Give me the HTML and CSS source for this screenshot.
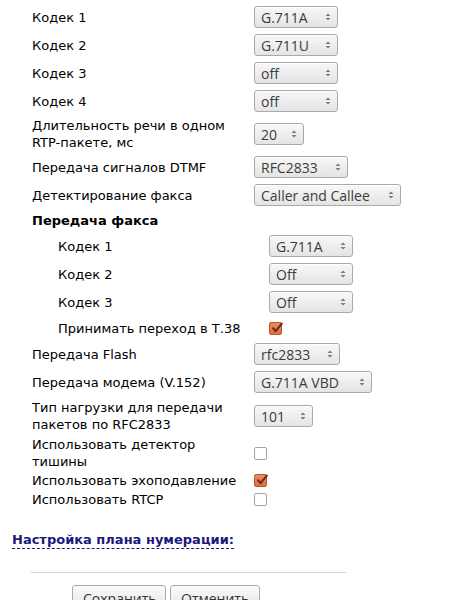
FILE: index.html
```html
<!DOCTYPE html>
<html lang="ru">
<head>
<meta charset="utf-8">
<title>Настройки</title>
<link rel="stylesheet" href="styles.css">
</head>
<body>
<div class="page">
  <div class="settings">
    <div class="row"><span class="label">Кодек 1</span><span class="sel w84"><select><option>G.711A</option></select><svg class="arr" viewBox="0 0 6 10"><path d="M0.5 4L3 1.5L5.5 4Z M0.5 6L3 8.5L5.5 6Z"/></svg></span></div>
    <div class="row"><span class="label">Кодек 2</span><span class="sel w84"><select><option>G.711U</option></select><svg class="arr" viewBox="0 0 6 10"><path d="M0.5 4L3 1.5L5.5 4Z M0.5 6L3 8.5L5.5 6Z"/></svg></span></div>
    <div class="row"><span class="label">Кодек 3</span><span class="sel w84"><select><option>off</option></select><svg class="arr" viewBox="0 0 6 10"><path d="M0.5 4L3 1.5L5.5 4Z M0.5 6L3 8.5L5.5 6Z"/></svg></span></div>
    <div class="row"><span class="label">Кодек 4</span><span class="sel w84"><select><option>off</option></select><svg class="arr" viewBox="0 0 6 10"><path d="M0.5 4L3 1.5L5.5 4Z M0.5 6L3 8.5L5.5 6Z"/></svg></span></div>
    <div class="row tall"><span class="label">Длительность речи в одном RTP-пакете, мс</span><span class="sel w50"><select><option>20</option></select><svg class="arr" viewBox="0 0 6 10"><path d="M0.5 4L3 1.5L5.5 4Z M0.5 6L3 8.5L5.5 6Z"/></svg></span></div>
    <div class="row"><span class="label">Передача сигналов DTMF</span><span class="sel w94"><select><option>RFC2833</option></select><svg class="arr" viewBox="0 0 6 10"><path d="M0.5 4L3 1.5L5.5 4Z M0.5 6L3 8.5L5.5 6Z"/></svg></span></div>
    <div class="row"><span class="label">Детектирование факса</span><span class="sel w147"><select><option>Caller and Callee</option></select><svg class="arr" viewBox="0 0 6 10"><path d="M0.5 4L3 1.5L5.5 4Z M0.5 6L3 8.5L5.5 6Z"/></svg></span></div>
    <div class="heading">Передача факса</div>
    <div class="nested">
      <div class="row"><span class="label">Кодек 1</span><span class="sel w84"><select><option>G.711A</option></select><svg class="arr" viewBox="0 0 6 10"><path d="M0.5 4L3 1.5L5.5 4Z M0.5 6L3 8.5L5.5 6Z"/></svg></span></div>
      <div class="row"><span class="label">Кодек 2</span><span class="sel w84"><select><option>Off</option></select><svg class="arr" viewBox="0 0 6 10"><path d="M0.5 4L3 1.5L5.5 4Z M0.5 6L3 8.5L5.5 6Z"/></svg></span></div>
      <div class="row"><span class="label">Кодек 3</span><span class="sel w84"><select><option>Off</option></select><svg class="arr" viewBox="0 0 6 10"><path d="M0.5 4L3 1.5L5.5 4Z M0.5 6L3 8.5L5.5 6Z"/></svg></span></div>
      <div class="row check-row t38"><span class="label">Принимать переход в Т.38</span><span class="check on"><svg viewBox="0 0 13 13"><path d="M3 6.2L5.6 9.2L11.8 1.6" /></svg></span></div>
    </div>
    <div class="row"><span class="label">Передача Flash</span><span class="sel w86"><select><option>rfc2833</option></select><svg class="arr" viewBox="0 0 6 10"><path d="M0.5 4L3 1.5L5.5 4Z M0.5 6L3 8.5L5.5 6Z"/></svg></span></div>
    <div class="row"><span class="label">Передача модема (V.152)</span><span class="sel w118"><select><option>G.711A VBD</option></select><svg class="arr" viewBox="0 0 6 10"><path d="M0.5 4L3 1.5L5.5 4Z M0.5 6L3 8.5L5.5 6Z"/></svg></span></div>
    <div class="row tall2"><span class="label">Тип нагрузки для передачи пакетов по RFC2833</span><span class="sel w59"><select><option>101</option></select><svg class="arr" viewBox="0 0 6 10"><path d="M0.5 4L3 1.5L5.5 4Z M0.5 6L3 8.5L5.5 6Z"/></svg></span></div>
    <div class="row check-row"><span class="label">Использовать детектор тишины</span><span class="check"></span></div>
    <div class="row check-row echo"><span class="label">Использовать эхоподавление</span><span class="check on"><svg viewBox="0 0 13 13"><path d="M3 6.2L5.6 9.2L11.8 1.6" /></svg></span></div>
    <div class="row check-row"><span class="label">Использовать RTCP</span><span class="check"></span></div>
  </div>
  <div class="section-link"><a href="#">Настройка плана нумерации:</a></div>
  <hr class="divider">
  <div class="buttons">
    <button class="btn save">Сохранить</button>
    <button class="btn cancel">Отменить</button>
  </div>
</div>
</body>
</html>
```
FILE: styles.css
```css
html, body {
  margin: 0;
  padding: 0;
  background: #fff;
}
body {
  font-family: "DejaVu Sans", Verdana, sans-serif;
  font-size: 13px;
  color: #000;
  overflow: hidden;
}
.page {
  padding: 3px 0 0 12px;
}
.settings {
  padding-left: 20px;
}
.row {
  display: grid;
  grid-template-columns: 222px auto;
  align-items: center;
  justify-items: start;
  min-height: 28px;
}
.row.tall { min-height: 38px; }
.row.tall2 { min-height: 40px; }
.row.check-row { min-height: 18px; }
.row.echo { min-height: 20px; }
.row.t38 { min-height: 24px; }
.label {
  line-height: 17px;
  padding-right: 8px;
}
.heading {
  font-weight: bold;
  line-height: 23px;
  height: 23px;
  font-size: 13px;
}
.nested {
  padding-left: 26px;
}
.nested .row {
  grid-template-columns: 211px auto;
}
.sel {
  position: relative;
  display: inline-block;
  height: 22px;
}
.sel select {
  -webkit-appearance: none;
  appearance: none;
  width: 100%;
  height: 22px;
  margin: 0;
  padding: 0 0 0 6px;
  border: 1px solid #a9a9a9;
  border-radius: 3px;
  background: linear-gradient(#f8f8f8, #e4e4e4);
  font-family: "Open Sans", "Noto Sans", sans-serif;
  font-size: 14px;
  color: #3c3c3c;
  box-shadow: inset 0 1px 0 #fff;
}
.sel .arr {
  position: absolute;
  right: 7px;
  top: 6px;
  width: 6px;
  height: 10px;
  fill: #7a7a7a;
  pointer-events: none;
}
.w50 { width: 50px; }
.w59 { width: 59px; }
.w84 { width: 84px; }
.w86 { width: 86px; }
.w94 { width: 94px; }
.w118 { width: 118px; }
.w147 { width: 147px; }
.check {
  display: inline-block;
  box-sizing: border-box;
  width: 13px;
  height: 13px;
  border: 1px solid #a5a5a5;
  border-radius: 2px;
  background: #fff;
  position: relative;
}
.check.on {
  background: linear-gradient(#f08a5c, #e46b3d);
  border-color: #b9582f;
}
.check svg {
  position: absolute;
  left: 0;
  top: -1px;
  width: 13px;
  height: 13px;
  fill: none;
  stroke: #5b2f1c;
  stroke-width: 2;
  stroke-linecap: round;
  stroke-linejoin: round;
}
.section-link {
  margin-top: 24px;
}
.section-link a {
  font-weight: bold;
  font-size: 13px;
  color: #1a1a7c;
  text-decoration: none;
  border-bottom: 1px dashed #1a1a7c;
  padding-bottom: 1px;
}
.divider {
  margin: 25px 0 0 19px;
  width: 315px;
  border: 0;
  border-top: 1px solid #d0d0d0;
  height: 0;
}
.buttons {
  display: flex;
  gap: 4px;
  margin: 12px 0 0 60px;
}
.btn {
  height: 26px;
  padding: 0 10px;
  border: 1px solid #aaa;
  border-radius: 3px;
  background: linear-gradient(#fbfbfb, #e3e3e3);
  font-family: "Open Sans", "Noto Sans", sans-serif;
  font-size: 14px;
  color: #333;
}
.btn.save { width: 94px; }
.btn.cancel { width: 90px; }
```
